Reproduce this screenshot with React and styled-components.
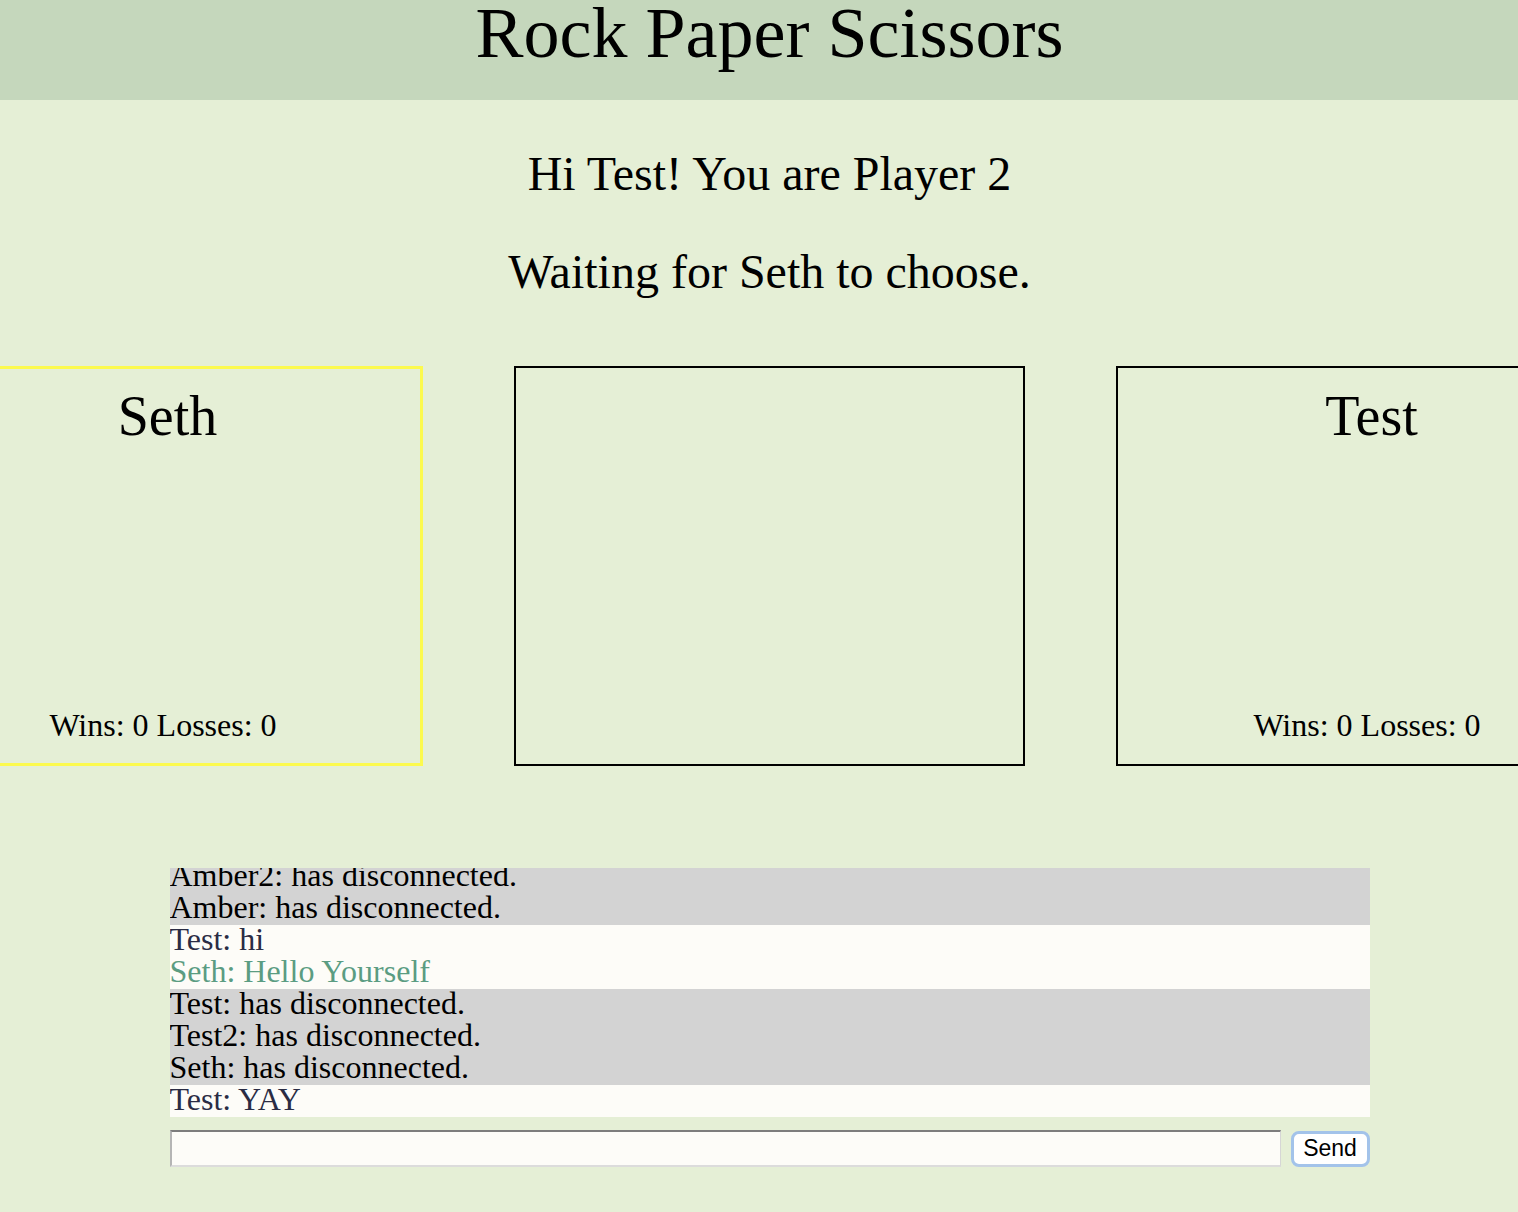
import React from "react";
import styled, { createGlobalStyle } from "styled-components";

const GlobalStyle = createGlobalStyle`
  html, body {
    margin: 0;
    padding: 0;
    overflow-x: hidden;
    background: #e5efd6;
  }
  body {
    font-family: "Liberation Serif", "Times New Roman", serif;
    color: #000;
  }
`;

const Page = styled.div`
  width: 1539px;
  min-height: 1212px;
  background: #e5efd6;
  overflow: hidden;
`;

const Header = styled.header`
  height: 100px;
  background: #c5d7bc;
  text-align: center;
`;

const Title = styled.h1`
  margin: 0;
  font-size: 72px;
  line-height: 66px;
  font-weight: normal;
`;

const Status = styled.section`
  display: flex;
  flex-direction: column;
  align-items: center;
  gap: 50px;
  padding-top: 50px;
`;

const StatusLine = styled.p`
  margin: 0;
  font-size: 48px;
  line-height: 48px;
`;

const Arena = styled.section`
  display: flex;
  justify-content: center;
  gap: 91px;
  margin-top: 70px;
`;

const Panel = styled.div`
  box-sizing: border-box;
  flex: 0 0 511px;
  width: 511px;
  height: 400px;
  border: ${(p) => (p.$active ? "3px solid #fcfa4e" : "2px solid #000")};
  display: flex;
  flex-direction: column;
  justify-content: space-between;
  align-items: center;
  padding: ${(p) => (p.$active ? "19px 0 22px" : "20px 0 23px")};
`;

const PlayerName = styled.div`
  font-size: 56px;
  line-height: 56px;
`;

const Stats = styled.div`
  font-size: 32px;
  line-height: 32px;
  padding-right: 9px;
`;

const Chat = styled.section`
  width: 1200px;
  margin: 102px auto 0;
  display: flex;
  flex-direction: column;
`;

const Log = styled.div`
  height: 249px;
  overflow: hidden;
  display: flex;
  flex-direction: column;
  justify-content: flex-end;
`;

const Message = styled.div`
  flex: 0 0 auto;
  font-size: 32px;
  line-height: 28px;
  height: 28px;
  padding-bottom: 4px;
  white-space: nowrap;
  background: ${(p) => (p.$kind === "system" ? "#d3d3d3" : "#fdfcf8")};
  color: ${(p) =>
    p.$kind === "system" ? "#000" : p.$kind === "other" ? "#5b9c82" : "#2a2c44"};
`;

const InputRow = styled.form`
  display: flex;
  align-items: center;
  gap: 10px;
  margin-top: 13px;
`;

const TextInput = styled.input`
  box-sizing: border-box;
  width: 1111px;
  height: 37px;
  margin: 0;
  background: #fdfcf8;
  border-top: 2px solid #7d7d7d;
  border-left: 2px solid #b5b5b5;
  border-right: 1px solid #d6d6d6;
  border-bottom: 2px solid #dcdcdc;
  outline: none;
  padding: 0 4px;
  font-size: 20px;
  font-family: "Liberation Sans", Arial, sans-serif;
`;

const SendButton = styled.button`
  box-sizing: border-box;
  width: 79px;
  height: 36px;
  margin: 0;
  background: #ffffff;
  border: 3px solid #a3c3ea;
  border-radius: 8px;
  font-family: "Liberation Sans", Arial, sans-serif;
  font-size: 23px;
  line-height: 1;
  color: #000;
  padding: 0 0 1px;
  cursor: pointer;
`;

const messages = [
  { kind: "system", text: "Amber2: has disconnected." },
  { kind: "system", text: "Amber: has disconnected." },
  { kind: "self", text: "Test: hi" },
  { kind: "other", text: "Seth: Hello Yourself" },
  { kind: "system", text: "Test: has disconnected." },
  { kind: "system", text: "Test2: has disconnected." },
  { kind: "system", text: "Seth: has disconnected." },
  { kind: "self", text: "Test: YAY" },
];

export default function App() {
  return (
    <>
      <GlobalStyle />
      <Page>
        <Header>
          <Title>Rock Paper Scissors</Title>
        </Header>
        <Status>
          <StatusLine>Hi Test! You are Player 2</StatusLine>
          <StatusLine>Waiting for Seth to choose.</StatusLine>
        </Status>
        <Arena>
          <Panel $active>
            <PlayerName>Seth</PlayerName>
            <Stats>Wins: 0 Losses: 0</Stats>
          </Panel>
          <Panel />
          <Panel>
            <PlayerName>Test</PlayerName>
            <Stats>Wins: 0 Losses: 0</Stats>
          </Panel>
        </Arena>
        <Chat>
          <Log>
            {messages.map((m, i) => (
              <Message key={i} $kind={m.kind}>
                {m.text}
              </Message>
            ))}
          </Log>
          <InputRow onSubmit={(e) => e.preventDefault()}>
            <TextInput type="text" />
            <SendButton type="submit">Send</SendButton>
          </InputRow>
        </Chat>
      </Page>
    </>
  );
}
